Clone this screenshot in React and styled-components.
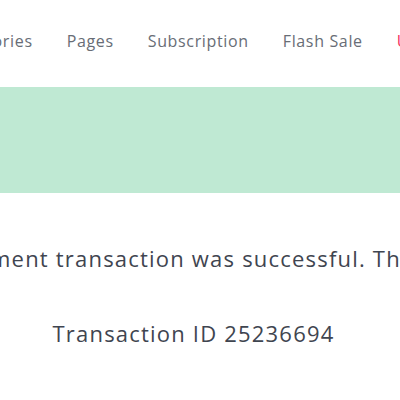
import React from "react";
import styled, { createGlobalStyle } from "styled-components";

const Global = createGlobalStyle`
  html, body { margin: 0; padding: 0; background: #fff; overflow: hidden; }
  body { font-family: "Open Sans", "Liberation Sans", sans-serif; }
`;

const Page = styled.div`
  width: 400px;
  height: 400px;
  overflow: hidden;
  display: flex;
  flex-direction: column;
`;

const Nav = styled.nav`
  height: 87px;
  display: flex;
  align-items: center;
  gap: 34px;
  margin-left: -53px;
  white-space: nowrap;
`;

const NavItem = styled.a`
  font-size: 16px;
  color: ${(p) => (p.$hot ? "#f5355f" : "#686d76")};
  text-decoration: none;
  letter-spacing: 0.65px;
  padding-bottom: 6px;
`;

const Banner = styled.div`
  height: 106px;
  background: #bfe9d3;
`;

const Body = styled.section`
  display: flex;
  flex-direction: column;
  align-items: center;
  padding-top: 50px;
  padding-right: 13px;
  gap: 45px;
`;

const Line = styled.p`
  margin: 0;
  white-space: nowrap;
  font-size: 22px;
  line-height: 30px;
  color: #3f4550;
  letter-spacing: 1.2px;
`;

export default function App() {
  return (
    <Page>
      <Global />
      <Nav>
        <NavItem>Categories</NavItem>
        <NavItem>Pages</NavItem>
        <NavItem>Subscription</NavItem>
        <NavItem>Flash Sale</NavItem>
        <NavItem $hot>Upcoming</NavItem>
      </Nav>
      <Banner />
      <Body>
        <Line>Your payment transaction was successful. Thank you.</Line>
        <Line>Transaction ID 25236694</Line>
      </Body>
    </Page>
  );
}
